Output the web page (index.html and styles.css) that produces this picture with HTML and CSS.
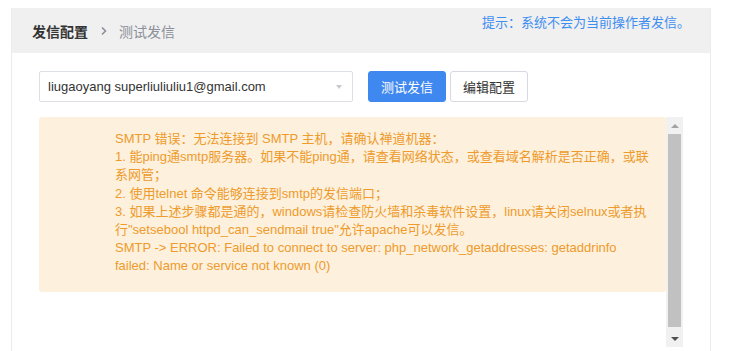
FILE: index.html
```html
<!DOCTYPE html>
<html lang="zh-CN">
<head>
<meta charset="utf-8">
<title>测试发信</title>
<link rel="stylesheet" href="styles.css">
</head>
<body>
<div class="panel">
  <div class="header">
    <div class="crumbs">
      <span class="crumb-main">发信配置</span>
      <svg class="chev" width="8" height="10" viewBox="0 0 8 10"><path d="M2 1.5 L5.5 5 L2 8.5" fill="none" stroke="#8c9099" stroke-width="1.6"/></svg>
      <span class="crumb-sub">测试发信</span>
    </div>
    <div class="hint">提示：系统不会为当前操作者发信。</div>
  </div>
  <div class="body">
    <div class="toolbar">
      <div class="select">
        <span class="select-text">liugaoyang superliuliuliu1@gmail.com</span>
        <span class="caret"></span>
      </div>
      <button class="btn btn-primary">测试发信</button>
      <button class="btn btn-default">编辑配置</button>
    </div>
    <div class="scroller">
      <div class="scroll-content">
        <div class="alert">
          <div class="alert-text">SMTP 错误：无法连接到 SMTP 主机，请确认禅道机器：<br>1. 能ping通smtp服务器。如果不能ping通，请查看网络状态，或查看域名解析是否正确，或联系网管；<br>2. 使用telnet 命令能够连接到smtp的发信端口；<br>3. 如果上述步骤都是通的，windows请检查防火墙和杀毒软件设置，linux请关闭selnux或者执行"setsebool httpd_can_sendmail true"允许apache可以发信。<br>SMTP -&gt; ERROR: Failed to connect to server: php_network_getaddresses: getaddrinfo failed: Name or service not known (0)</div>
        </div>
      </div>
      <div class="scrollbar">
        <div class="sb-btn"><span class="tri-up"></span></div>
        <div class="sb-track"><div class="sb-thumb"></div></div>
        <div class="sb-btn"><span class="tri-down"></span></div>
      </div>
    </div>
  </div>
</div>
</body>
</html>
```
FILE: styles.css
```css
* { box-sizing: border-box; }
html, body { margin: 0; padding: 0; background: #fff; }
body {
  font-family: "Liberation Sans", "Noto Sans CJK SC", sans-serif;
  font-size: 13px;
  color: #333;
}
.panel {
  margin: 8px 0 0 11px;
  width: 700px;
  height: 343px;
  border-left: 1px solid #ececec;
  border-right: 1px solid #ececec;
  overflow: hidden;
}
.header {
  height: 45px;
  background: #f0f0f0;
  display: flex;
  justify-content: space-between;
  padding: 0 20px 0 20px;
}
.crumbs {
  display: flex;
  align-items: center;
  font-size: 14px;
}
.crumb-main { font-weight: bold; color: #333; }
.chev { margin: 0 11px 0 12px; }
.crumb-sub { color: #8a8f99; }
.hint {
  color: #3e8ef0;
  font-size: 13px;
  padding-top: 6px;
  line-height: 18px;
}
.body {
  padding: 18px 0 0 27px;
}
.toolbar {
  display: flex;
  align-items: center;
  height: 31px;
}
.select {
  width: 314px;
  height: 31px;
  border: 1px solid #dcdfe6;
  border-radius: 2px;
  display: flex;
  align-items: center;
  justify-content: space-between;
  padding: 0 10px 0 8px;
  color: #333;
}
.caret {
  width: 0; height: 0;
  border-left: 3.5px solid transparent;
  border-right: 3.5px solid transparent;
  border-top: 4px solid #c6c9cf;
}
.btn {
  height: 31px;
  width: 78px;
  font-family: inherit;
  font-size: 13px;
  border-radius: 3px;
  padding: 0;
  cursor: pointer;
}
.btn-primary {
  margin-left: 15px;
  background: #3f88ef;
  border: 1px solid #3f88ef;
  color: #fff;
}
.btn-default {
  margin-left: 4px;
  background: #fff;
  border: 1px solid #d6d9e2;
  color: #333;
}
.scroller {
  margin-top: 15px;
  display: flex;
  height: 230px;
}
.scroll-content {
  width: 627px;
}
.alert {
  background: #fdf0dd;
  border-radius: 3px;
  padding: 13px 10px 16px 76px;
  height: 175px;
}
.alert-text {
  width: 537px;
  color: #ee9b2b;
  line-height: 18.2px;
}
.scrollbar {
  width: 17px;
  background: #f1f1f1;
  display: flex;
  flex-direction: column;
}
.sb-btn {
  height: 17px;
  display: flex;
  align-items: center;
  justify-content: center;
}
.sb-track {
  flex: 1;
  padding: 0 2px 3px 2px;
}
.sb-thumb {
  height: 100%;
  background: #c1c1c1;
}
.tri-up {
  width: 0; height: 0;
  border-left: 4px solid transparent;
  border-right: 4px solid transparent;
  border-bottom: 4px solid #a3a3a3;
}
.tri-down {
  width: 0; height: 0;
  border-left: 4px solid transparent;
  border-right: 4px solid transparent;
  border-top: 4px solid #505050;
}
```
